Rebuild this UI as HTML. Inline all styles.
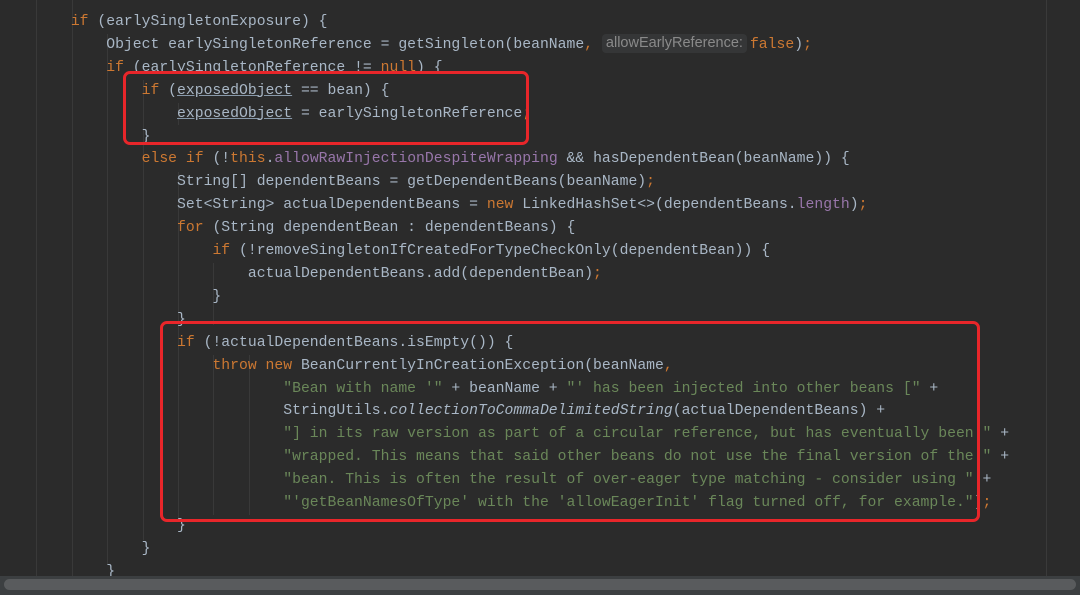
<!DOCTYPE html>
<html><head><meta charset="utf-8"><style>
html,body{margin:0;padding:0;background:#2b2b2b;width:1080px;height:595px;overflow:hidden;position:relative}
pre{position:absolute;left:0;top:11px;margin:0;font-family:"Liberation Mono",monospace;font-size:14.75px;line-height:22.9px;color:#a9b7c6;white-space:pre}
.k{color:#cc7832}.s{color:#6a8759}.p{color:#9876aa}.i{font-style:italic}.u{text-decoration:underline;text-decoration-color:#8899aa}
.hint{display:inline-block;background:#353637;color:#8a8a8a;font-family:"Liberation Sans",sans-serif;font-size:14.5px;line-height:19px;padding:0 4px;border-radius:4px;margin:0 3px 0 0;vertical-align:1px}
.g{position:absolute;width:1px;background:#393939}
.box{position:absolute;border:3px solid #e8262a;border-radius:7px}
.sb{position:absolute;left:0;top:576px;width:1080px;height:19px;background:#3c3f41}
.th{position:absolute;left:4px;top:579px;width:1072px;height:11px;background:#595b5d;border-radius:6px}
.rm{position:absolute;left:1046px;top:0;width:1px;height:576px;background:#3a3a3a}
</style></head><body>
<div class="rm"></div>
<div class="g" style="left:36px;top:0;height:576px"></div>
<div class="g" style="left:72px;top:0;height:576px"></div>
<div class="g" style="left:107px;top:34px;height:530px"></div>
<div class="g" style="left:143px;top:80px;height:460px"></div>
<div class="g" style="left:178px;top:103px;height:22px"></div>
<div class="g" style="left:178px;top:172px;height:346px"></div>
<div class="g" style="left:213px;top:263px;height:62px"></div>
<div class="g" style="left:213px;top:355px;height:160px"></div>
<div class="g" style="left:249px;top:355px;height:160px"></div>
<pre>        <span class="k">if</span> (earlySingletonExposure) {
            Object earlySingletonReference = getSingleton(beanName<span class="k">,</span> <span class="hint">allowEarlyReference:</span><span class="k">false</span>)<span class="k">;</span>
            <span class="k">if</span> (earlySingletonReference != <span class="k">null</span>) {
                <span class="k">if</span> (<span class="u">exposedObject</span> == bean) {
                    <span class="u">exposedObject</span> = earlySingletonReference<span class="k">;</span>
                }
                <span class="k">else if</span> (!<span class="k">this</span>.<span class="p">allowRawInjectionDespiteWrapping</span> &amp;&amp; hasDependentBean(beanName)) {
                    String[] dependentBeans = getDependentBeans(beanName)<span class="k">;</span>
                    Set&lt;String&gt; actualDependentBeans = <span class="k">new</span> LinkedHashSet&lt;&gt;(dependentBeans.<span class="p">length</span>)<span class="k">;</span>
                    <span class="k">for</span> (String dependentBean : dependentBeans) {
                        <span class="k">if</span> (!removeSingletonIfCreatedForTypeCheckOnly(dependentBean)) {
                            actualDependentBeans.add(dependentBean)<span class="k">;</span>
                        }
                    }
                    <span class="k">if</span> (!actualDependentBeans.isEmpty()) {
                        <span class="k">throw new</span> BeanCurrentlyInCreationException(beanName<span class="k">,</span>
                                <span class="s">"Bean with name '"</span> + beanName + <span class="s">"' has been injected into other beans ["</span> +
                                StringUtils.<span class="i">collectionToCommaDelimitedString</span>(actualDependentBeans) +
                                <span class="s">"] in its raw version as part of a circular reference, but has eventually been "</span> +
                                <span class="s">"wrapped. This means that said other beans do not use the final version of the "</span> +
                                <span class="s">"bean. This is often the result of over-eager type matching - consider using "</span> +
                                <span class="s">"'getBeanNamesOfType' with the 'allowEagerInit' flag turned off, for example."</span>)<span class="k">;</span>
                    }
                }
            }
</pre>
<div class="box" style="left:123px;top:71px;width:400px;height:68px"></div>
<div class="box" style="left:160px;top:321px;width:814px;height:195px"></div>
<div class="sb"></div><div class="th"></div>
</body></html>
